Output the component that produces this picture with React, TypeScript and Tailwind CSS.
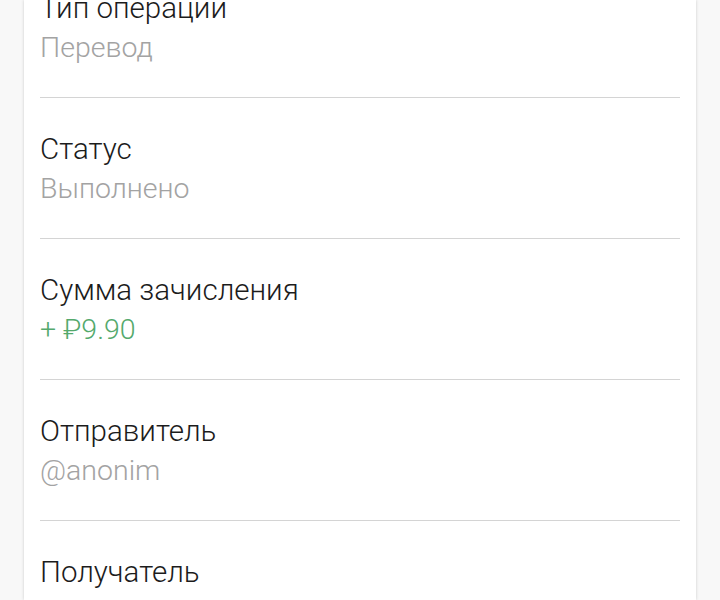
import React from 'react';

const ROWS = [
  { label: 'Тип операции', value: 'Перевод', tone: 'text-[#a3a3a3]' },
  { label: 'Статус', value: 'Выполнено', tone: 'text-[#a3a3a3]' },
  { label: 'Сумма зачисления', value: '+ ₽9.90', tone: 'text-[#54a96c]' },
  { label: 'Отправитель', value: '@anonim', tone: 'text-[#a3a3a3]' },
  { label: 'Получатель', value: '@anonim', tone: 'text-[#a3a3a3]' },
];

export default function App() {
  return (
    <div className="h-[600px] overflow-hidden bg-[#f8f8f8] px-[24px]" style={{ fontFamily: 'Roboto, "Noto Sans", sans-serif' }}>
      <div className="flex h-full flex-col bg-white px-[16px] shadow-[0_0_3px_rgba(0,0,0,0.18)]">
        <div className="-mt-[43px]">
          {ROWS.map((row) => (
            <div key={row.label} className="pt-[31px] pb-[29px] border-b border-[#d4d4d4]">
              <div className="text-[29.5px] font-light leading-[40px] text-[#1c1c1c]">{row.label}</div>
              <div className={`text-[28.5px] font-light leading-[40px] ${row.tone}`}>{row.value}</div>
            </div>
          ))}
        </div>
      </div>
    </div>
  );
}
